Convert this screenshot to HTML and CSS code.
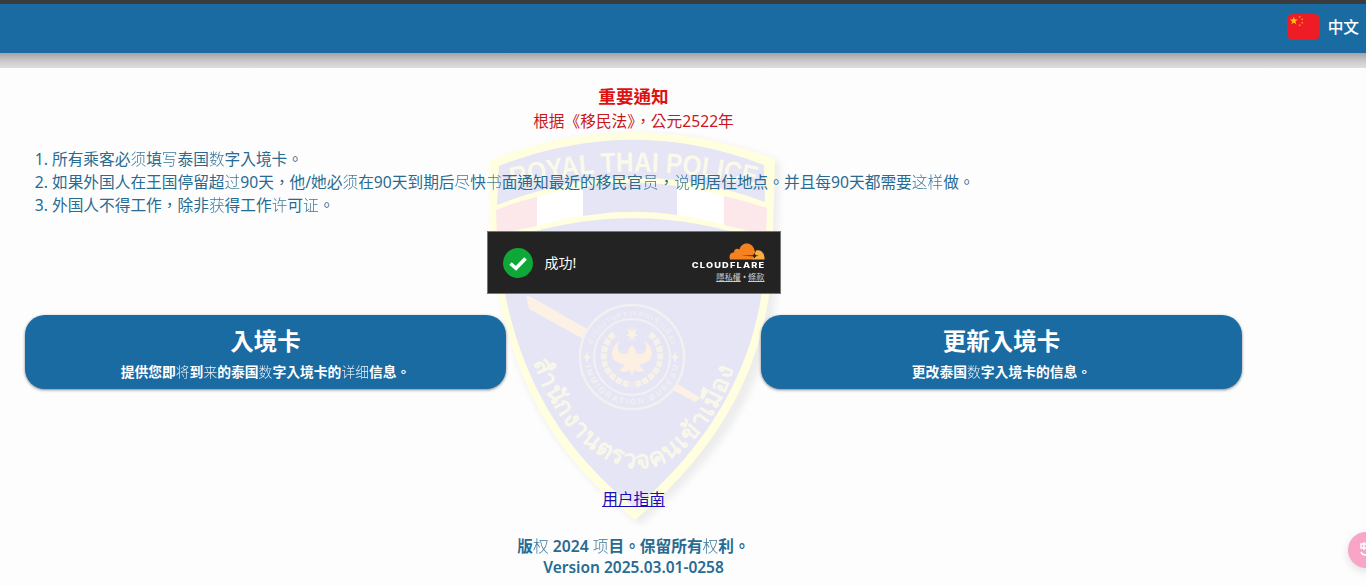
FILE: index.html
```html
<!DOCTYPE html>
<html lang="zh-Hant">
<head>
    <meta charset="UTF-8">
    <meta name="viewport" content="width=device-width, initial-scale=1.0">
    <title>入境卡</title>
    <link rel="stylesheet" href="styles.css">
</head>
<body>
    <header class="topbar">
        <svg class="flag" viewBox="0 0 33 26">
            <rect width="33" height="26" rx="6" fill="#ee1c25"/>
            <path d="M6.8 2.8l1 2.8h2.9L8.4 7.4l.8 2.8-2.4-1.7-2.4 1.7.8-2.8L2.9 5.6h2.9z" fill="#ffc90e"/>
            <g fill="#f5801c">
                <circle cx="12.7" cy="2.7" r="1"/>
                <circle cx="15.2" cy="5.2" r="1"/>
                <circle cx="15.2" cy="8.8" r="1"/>
                <circle cx="12.7" cy="11.3" r="1"/>
            </g>
        </svg>
        <span class="lang">中文</span>
    </header>
    <div class="topbar-shadow"></div>

    <!-- police badge watermark -->
    <svg class="watermark" viewBox="480 125 310 405">
        <defs>
            <path id="bannerArc" d="M512 187Q632 157 755 186"/>
            <path id="thaiArc" d="M533 362C552 415 588 465 640 469C680 468 722 418 737 355"/>
            <path id="sealTop" d="M590.500 357A41.500 41.500 0 0 1 673.500 357"/>
            <path id="sealBottom" d="M584.500 357A47.500 47.500 0 0 0 679.500 357"/>
        </defs>
        <path class="badge-shadow" d="M495 164Q636 105 780 162L778 235C782 340 755 430 640 525C535 440 504 360 494 235Z"/>
        <path fill="#ffffe0" d="M490 160Q632 105 775 159L773 235C774 335 740 432 635 520C545 450 502 360 489 235Z"/>
        <path fill="#e5e5f5" d="M499 166Q632 114 764 165L765 202Q632 152 497 205Z"/>
        <path fill="#fce8ea" d="M496 210Q515 202 537 197V226Q515 230 497 236Z"/>
        <path fill="#fff" d="M537 197Q560 190 583 187V216Q560 219 537 226Z"/>
        <path fill="#e5e5f5" d="M583 187Q632 179 677 186V215Q632 208 583 216Z"/>
        <path fill="#fff" d="M677 186Q702 190 724 196V225Q702 218 677 215Z"/>
        <path fill="#fce8ea" d="M724 196Q746 201 767 208L766 236Q746 230 724 225Z"/>
        <path fill="#e5e5f5" d="M497 243Q632 194 765 242C766 330 733 424 635 508C550 440 510 358 497 243Z"/>
        <text class="banner-text"><textPath href="#bannerArc" textLength="246" lengthAdjust="spacingAndGlyphs">ROYAL THAI POLICE</textPath></text>

        <path fill="#fcf1e4" d="M526 295L533 298L589 330L587 341L529 309Z"/>
        <path fill="#fcf1e4" d="M674 382L701 398L695 402L669 388Z"/>
        <circle cx="632" cy="357" r="52" fill="#e5e5f5" stroke="#f2f1f0" stroke-width="2.500"/>
        <circle cx="632" cy="357" r="38" fill="none" stroke="#f2f1f0" stroke-width="2"/>
        <text class="seal-thai"><textPath href="#sealTop" startOffset="12" textLength="106">สำนักงานตรวจคนเข้าเมือง</textPath></text>
        <text class="seal-text"><textPath href="#sealBottom" startOffset="9" textLength="131">IMMIGRATION BUREAU</textPath></text>
        <path fill="#f8f3e6" d="M587 352l1.500 4 3.500 1-3.500 1.500-1.500 4-1.500-4-3.500-1.500 3.500-1zM675 352l1.500 4 3.500 1-3.500 1.500-1.500 4-1.500-4-3.500-1.500 3.500-1z"/>
        <g fill="none" stroke="#f6f2e8" stroke-width="6" stroke-dasharray="6 1.500">
            <path d="M614 334C597 348 600 379 631 385"/>
            <path d="M650 334C667 348 664 379 633 385"/>
        </g>
        <g fill="#fbf0e2">
            <path d="M620 340C609 349 610 360 619 363L625 365 619 371 625 372 630 370 632 377 634 370 639 372 645 371 639 365 645 363C654 360 655 349 644 340C649 349 645 355 637 354L635 348 632 345 629 348 627 354C619 355 615 349 620 340Z"/>
            <path d="M632 326l1 5 4-3-2 5 3 3-4 0 1 5-3-3-3 3 1-5-4 0 3-3-2-5 4 3z"/>
        </g>
        <text class="badge-thai"><textPath href="#thaiArc" textLength="305">สำนักงานตรวจคนเข้าเมือง</textPath></text>
    </svg>

    <main class="container">
        <div class="notice">
            <h2>重要通知</h2>
            <p>根据《移民法》，公元2522年</p>
        </div>

        <ol class="rules">
            <li>所有乘客必<i>须</i>填<i>写</i>泰国<i>数</i>字入境卡。</li>
            <li>如果外国人在王国停留超<i>过</i>90天，他/她必<i>须</i>在90天到期后<i>尽</i>快<i>书</i>面通知最近的移民官<i>员</i>，<i>说</i>明居住地点。并且每90天都需要<i>这样</i>做。</li>
            <li>外国人不得工作，除非<i>获</i>得工作<i>许</i>可<i>证</i>。</li>
        </ol>

        <div class="captcha">
            <svg class="check" viewBox="0 0 30 30">
                <circle cx="15" cy="15" r="15" fill="#0fa838"/>
                <path d="M7.500 15.500l5.500 4.800 9.500-9.800" fill="none" stroke="#fff" stroke-width="3.600"/>
            </svg>
            <span class="success">成功!</span>
            <div class="brand">
                <svg class="cloud" viewBox="0 0 36 17">
                    <path fill="#f6821f" d="M1 16.500C-.5 12 2 9 5 9.500C5 6 8 5 10.500 6.500C13-2 24-1 25.500 7.500L27 11.500 25 16.500Z"/>
                    <path fill="#fbad41" d="M24 16.500L27 7.500C32 6 36 10.500 35.500 16.500Z"/>
                    <path d="M12 12.800L24 12.300L25.500 10 26.800 12.300 30 12.800 27 13.300 25.500 15.500 24 13.300Z" fill="#232323"/>
                </svg>
                <div class="brand-name">CLOUDFLARE</div>
                <div class="brand-links"><a>隱私權</a> • <a>條款</a></div>
            </div>
        </div>

        <div class="cards">
            <div class="card">
                <h1>入境卡</h1>
                <p>提供您即<i>将</i>到<i>来</i>的泰国<i>数</i>字入境卡的<i>详细</i>信息。</p>
            </div>
            <div class="card">
                <h1>更新入境卡</h1>
                <p>更改泰国<i>数</i>字入境卡的信息。</p>
            </div>
        </div>

        <a class="guide" href="#">用户指南</a>

        <footer>
            <div>版<i>权</i> 2024 <i>项</i>目。保留所有<i>权</i>利。</div>
            <div>Version 2025.03.01-0258</div>
        </footer>
    </main>

    <div class="chat">
        <svg viewBox="0 0 36 36">
            <path d="M13 12h6v4h-6zM16 10v8M13 20q1 3 5 3h5" fill="none" stroke="#fff" stroke-width="1.500"/>
        </svg>
    </div>
</body>
</html>
```
FILE: styles.css
```css
* {
    box-sizing: border-box;
}
body {
    margin: 0;
    height: 586px;
    position: relative;
    overflow: hidden;
    background-color: #fdfdfd;
    color: #286b92;
    font-family: "Noto Sans", "Noto Sans CJK TC", sans-serif;
    font-size: 15.7px;
    text-spacing-trim: space-all;
}
h1, h2, p {
    margin: 0;
}
/* characters drawn with a lighter fallback font */
i {
    font-style: normal;
    font-weight: 300;
    font-family: "Noto Sans", "Noto Sans CJK SC", sans-serif;
    opacity: 0.9;
    line-height: 1;
}
.topbar {
    height: 53px;
    border-top: 4px solid #3b3c3e;
    background-color: #1b6ba3;
    display: flex;
    align-items: center;
    justify-content: flex-end;
    padding: 0 7px 4px 0;
    gap: 8px;
    color: #fff;
}
.flag {
    width: 33px;
    height: 26px;
}
.lang {
    font-weight: 500;
}
.topbar-shadow {
    height: 15px;
    background: linear-gradient(#a4a2a4, #cccacb 55%, #dedede);
}
.watermark {
    position: absolute;
    left: 480px;
    top: 125px;
    width: 310px;
    height: 405px;
}
.badge-shadow {
    fill: #ededed;
    filter: blur(3px);
}
.banner-text {
    font: bold 28px "Liberation Sans", sans-serif;
    fill: #faf9ea;
}
.badge-thai {
    font-size: 25px;
    font-weight: bold;
    fill: #f9f7ea;
}
.seal-thai {
    font-size: 8px;
    fill: #f2f1f0;
}
.seal-text {
    font: bold 8px "Liberation Sans", sans-serif;
    fill: #f2f1f0;
}
.container {
    position: relative;
    width: 1267px;
    padding: 16px 25px 0;
    display: flex;
    flex-direction: column;
    align-items: center;
}
.notice {
    text-align: center;
    color: #c9181e;
}
.notice h2 {
    font-size: 17.6px;
    line-height: 25px;
    color: #e01010;
}
.notice p {
    line-height: 24px;
    text-spacing-trim: normal;
}
.rules {
    align-self: stretch;
    margin: 15px 0 0;
    padding-left: 27px;
    line-height: 23px;
    white-space: nowrap;
}
.rules li {
    height: 23px;
}
.captcha {
    width: 294px;
    height: 63px;
    margin-top: 14px;
    padding: 0 15px 0 15px;
    background-color: #232323;
    border: 1px solid #777;
    display: flex;
    align-items: center;
    color: #fff;
}
.check {
    width: 30px;
    height: 30px;
}
.success {
    margin-left: 12px;
    padding-bottom: 2px;
    font-size: 14px;
}
.brand {
    margin-left: auto;
    padding-top: 1px;
    display: flex;
    flex-direction: column;
    align-items: flex-end;
}
.cloud {
    width: 36px;
    height: 17px;
}
.brand-name {
    font: 800 7.8px/11px Inter, sans-serif;
    letter-spacing: 1px;
    margin-right: -1px;
    transform: scaleX(1.18);
    transform-origin: right;
}
.brand-links {
    font-size: 8.2px;
    line-height: 12px;
    color: #ccc;
}
.brand-links a {
    text-decoration: underline;
}
.cards {
    align-self: stretch;
    display: flex;
    justify-content: space-between;
    margin-top: 21px;
}
.card {
    width: 481px;
    height: 74px;
    padding-top: 9px;
    border-radius: 20px;
    background-color: #1b6ba3;
    box-shadow: 0 1px 3px rgba(40, 50, 70, 0.6);
    color: #fff;
    text-align: center;
}
.card h1 {
    font-size: 23.5px;
    line-height: 35px;
}
.card p {
    font-size: 13.8px;
    line-height: 25px;
    font-weight: bold;
}
.guide {
    margin-top: 99px;
    line-height: 23px;
    color: #1a0dc0;
}
footer {
    margin-top: 25px;
    text-align: center;
    font-weight: 600;
    line-height: 21px;
}
footer div {
    height: 21px;
}
footer div:last-child {
    font-size: 15.5px;
}
.chat {
    position: absolute;
    left: 1348px;
    top: 532px;
    width: 36px;
    height: 36px;
    border-radius: 50%;
    background-color: #f8a5c8;
    box-shadow: 0 3px 10px rgba(0, 0, 0, 0.12);
}
```
